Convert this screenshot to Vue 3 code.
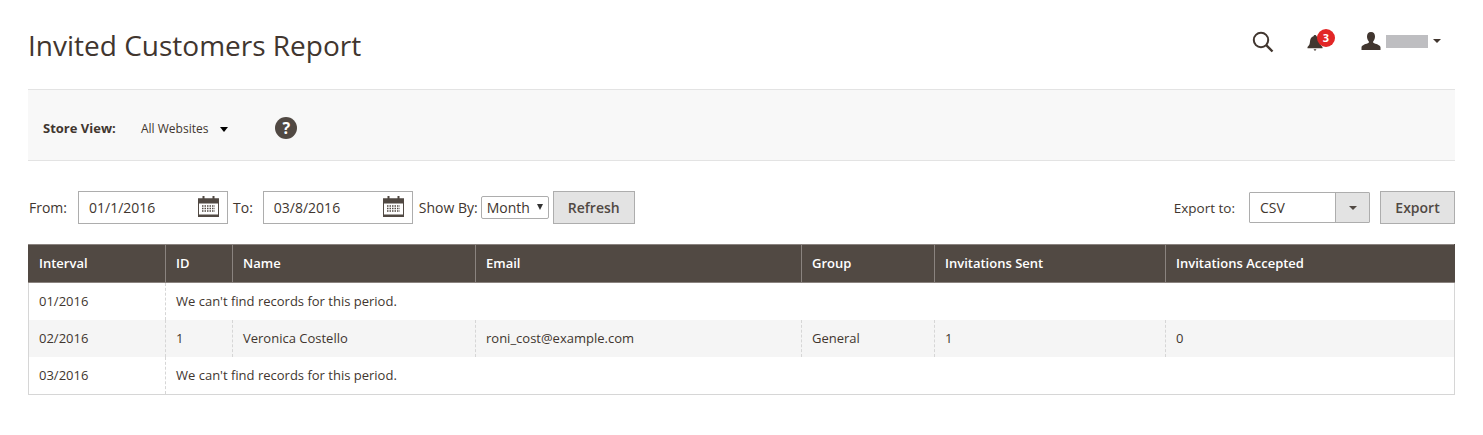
<script setup>
const columns = [
  { label: 'Interval', width: 137 },
  { label: 'ID', width: 67 },
  { label: 'Name', width: 243 },
  { label: 'Email', width: 326 },
  { label: 'Group', width: 133 },
  { label: 'Invitations Sent', width: 231 },
  { label: 'Invitations Accepted', width: 289 },
]

const dates = [
  { label: 'From:', value: '01/1/2016' },
  { label: 'To:', value: '03/8/2016' },
]
</script>

<template>
  <div class="page">
    <header class="page-header">
      <h1 class="page-title">Invited Customers Report</h1>
      <div class="actions">
        <svg class="icon-search" width="24" height="24" viewBox="0 0 24 24">
          <circle cx="10" cy="10" r="7.2" fill="none" stroke="#41362f" stroke-width="2" />
          <path d="M15.2 15.2 L21.5 21.500" stroke="#41362f" stroke-width="2.4" fill="none" />
        </svg>
        <div class="notify">
          <svg width="18" height="20" viewBox="0 0 18 20">
            <path d="M9 2c-.9 0-1.4.6-1.500 1.300C5 4 4.200 6 4 8.500c-.2 2.500-.8 4-2.500 5.500v1.200h15V14c-1.700-1.500-2.300-3-2.500-5.500C13.800 6 13 4 10.500 3.300 10.400 2.600 9.900 2 9 2z" fill="#41362f" />
            <path d="M7.500 16.200h3L9 18z" fill="#41362f" />
          </svg>
          <span class="badge">3</span>
        </div>
        <div class="user">
          <svg width="20" height="19" viewBox="0 0 20 19">
            <path d="M10 0c-2.800 0-4 2-4 4.500 0 2 .8 3.800 1.800 4.800v1.500C5.500 12 .5 13 .5 15.500V18h19v-2.500c0-2.500-5-3.500-7.300-4.700V9.300C13.200 8.300 14 6.500 14 4.500 14 2 12.800 0 10 0z" fill="#41362f" />
          </svg>
          <span class="user-name"></span>
          <span class="caret"></span>
        </div>
      </div>
    </header>

    <div class="scope-bar">
      <span class="scope-label">Store View:</span>
      <span class="scope-value">All Websites</span>
      <span class="scope-caret"></span>
      <span class="help">?</span>
    </div>

    <div class="toolbar">
      <div class="filters">
        <template v-for="d in dates" :key="d.label">
          <label class="field-label">{{ d.label }}</label>
          <div class="date-input">
            <span>{{ d.value }}</span>
            <svg width="21" height="21" viewBox="0 0 21 21">
              <rect x="0.500" y="3" width="20" height="17.500" fill="#fff" stroke="#514943" />
              <rect x="0" y="2.500" width="21" height="5" fill="#514943" />
              <rect x="0" y="18.500" width="21" height="2.500" fill="#514943" />
              <rect x="4.500" y="0" width="2" height="5.500" fill="#514943" />
              <rect x="14.500" y="0" width="2" height="5.500" fill="#514943" />
              <path d="M4 10h13M4 12.500h13M4 15h13" stroke="#514943" stroke-width="1.300" stroke-dasharray="1.500 1" />
            </svg>
          </div>
        </template>
        <label class="field-label show-by">Show By:</label>
        <div class="mini-select">
          <span>Month</span>
          <span class="mini-caret"></span>
        </div>
        <button class="btn">Refresh</button>
      </div>
      <div class="export">
        <label class="field-label export-label">Export to:</label>
        <div class="export-select">
          <span class="export-value">CSV</span>
          <span class="export-arrow"><span class="arrow-down"></span></span>
        </div>
        <button class="btn export-btn">Export</button>
      </div>
    </div>

    <table class="grid">
      <colgroup>
        <col v-for="c in columns" :key="c.label" :style="{ width: c.width + 'px' }" />
      </colgroup>
      <thead>
        <tr>
          <th v-for="c in columns" :key="c.label">{{ c.label }}</th>
        </tr>
      </thead>
      <tbody>
        <tr>
          <td>01/2016</td>
          <td colspan="6">We can't find records for this period.</td>
        </tr>
        <tr class="even">
          <td>02/2016</td>
          <td class="num">1</td>
          <td>Veronica Costello</td>
          <td>roni_cost@example.com</td>
          <td>General</td>
          <td class="num">1</td>
          <td>0</td>
        </tr>
        <tr class="last">
          <td>03/2016</td>
          <td colspan="6">We can't find records for this period.</td>
        </tr>
      </tbody>
    </table>
  </div>
</template>

<style>
body {
  background: #fff;
}
</style>

<style scoped>
.page {
  width: 1427px;
  margin-left: 28px;
  font-family: 'Open Sans', sans-serif;
  font-size: 13px;
  color: #41362f;
}
.page-header {
  display: flex;
  justify-content: space-between;
  height: 89px;
  border-bottom: 1px solid #e3e3e3;
}
.page-title {
  margin: 25px 0 0;
  font-size: 28px;
  font-weight: 400;
  line-height: 40px;
  color: #41362f;
}
.actions {
  position: relative;
  display: flex;
  align-items: flex-start;
  padding-top: 30px;
}
.icon-search {
  margin-right: 31px;
}
.notify {
  position: relative;
  width: 18px;
  height: 20px;
  margin-top: 3px;
  margin-right: 37px;
}
.badge {
  position: absolute;
  top: -4px;
  left: 11px;
  width: 18px;
  height: 18px;
  border-radius: 50%;
  background: #e22626;
  color: #fff;
  font-size: 11px;
  font-weight: 700;
  line-height: 18px;
  text-align: center;
}
.user {
  display: flex;
  align-items: center;
  margin-right: 14px;
  height: 22px;
}
.user-name {
  width: 42px;
  height: 13px;
  margin-left: 5px;
  margin-top: 1px;
  background: #bebec1;
}
.caret {
  margin-left: 5px;
  border-left: 4px solid transparent;
  border-right: 4px solid transparent;
  border-top: 4px solid #41362f;
}
.scope-bar {
  display: flex;
  align-items: center;
  height: 64px;
  padding: 6px 0 0 15px;
  background: #f8f8f8;
  border-bottom: 1px solid #e3e3e3;
}
.scope-label {
  font-size: 13px;
  font-weight: 700;
  width: 98px;
}
.scope-value {
  font-size: 12px;
}
.scope-caret {
  margin-left: 12px;
  margin-top: 2px;
  border-left: 4px solid transparent;
  border-right: 4px solid transparent;
  border-top: 5px solid #000;
}
.help {
  width: 22px;
  height: 22px;
  margin-left: 47px;
  border-radius: 50%;
  background: #514943;
  color: #fff;
  font-size: 16px;
  font-weight: 700;
  line-height: 22px;
  text-align: center;
}
.toolbar {
  display: flex;
  justify-content: space-between;
  align-items: center;
  height: 33px;
  margin-top: 30px;
}
.filters,
.export {
  display: flex;
  align-items: center;
}
.field-label {
  font-size: 14px;
  white-space: nowrap;
}
.filters .field-label:first-child {
  margin-left: 1px;
}
.date-input {
  box-sizing: border-box;
  display: flex;
  align-items: center;
  justify-content: space-between;
  width: 150px;
  height: 33px;
  margin: 0 5px 0 11px;
  padding: 0 8px 0 10px;
  border: 1px solid #adadad;
  font-size: 14px;
  color: #41362f;
}
.date-input ~ .date-input {
  margin-left: 10px;
}
.date-input svg {
  margin-top: -3px;
}
.show-by {
  margin-left: 1px;
  margin-right: 3px;
}
.mini-select {
  box-sizing: border-box;
  display: flex;
  align-items: center;
  justify-content: space-between;
  width: 68px;
  height: 23px;
  padding: 0 5px;
  border: 1px solid #adadad;
  border-radius: 2px;
  font-size: 14px;
  margin-right: 4px;
}
.mini-caret {
  margin-top: -2px;
  border-left: 3.500px solid transparent;
  border-right: 3.500px solid transparent;
  border-top: 6px solid #333;
}
.btn {
  box-sizing: border-box;
  height: 33px;
  width: 82px;
  padding: 0;
  background: #e3e3e3;
  border: 1px solid #adadad;
  font-family: 'Open Sans', sans-serif;
  font-size: 14px;
  font-weight: 600;
  color: #514943;
}
.export-label {
  margin-right: 14px;
  font-size: 13.500px;
}
.export-select {
  box-sizing: border-box;
  display: flex;
  width: 121px;
  height: 31px;
  margin-right: 10px;
  border: 1px solid #adadad;
  border-radius: 1px;
}
.export-value {
  flex: 1;
  padding-left: 10px;
  font-size: 14px;
  line-height: 29px;
}
.export-arrow {
  display: flex;
  align-items: center;
  justify-content: center;
  width: 33px;
  background: #e3e3e3;
  border-left: 1px solid #adadad;
}
.arrow-down {
  margin-top: 1px;
  border-left: 4px solid transparent;
  border-right: 4px solid transparent;
  border-top: 4px solid #514943;
}
.export-btn {
  width: 75px;
}
.grid {
  box-sizing: border-box;
  width: 1426px;
  margin-top: 20px;
  table-layout: fixed;
  border-collapse: collapse;
  border-bottom: 1px solid #d6d6d6;
  border-left: 1px solid #d6d6d6;
  border-right: 1px solid #d6d6d6;
}
th {
  box-sizing: border-box;
  height: 38px;
  padding: 0 10px 2px;
  background: #514943;
  border: 1px solid #8a837f;
  border-top-color: #8a837f;
  color: #fff;
  font-size: 13px;
  font-weight: 600;
  text-align: left;
}
th:first-child {
  border-left-color: #514943;
}
th:last-child {
  border-right-color: #514943;
}
td {
  box-sizing: border-box;
  height: 37px;
  padding: 0 10px;
  border-left: 1px dashed #d6d6d6;
  font-size: 13px;
  color: #41362f;
}
td:first-child {
  border-left: none;
}
.last td {
  height: 38px;
  padding-bottom: 1px;
}
.even td {
  background: #f5f5f5;
}
.num {
  color: #41362f;
}
</style>
